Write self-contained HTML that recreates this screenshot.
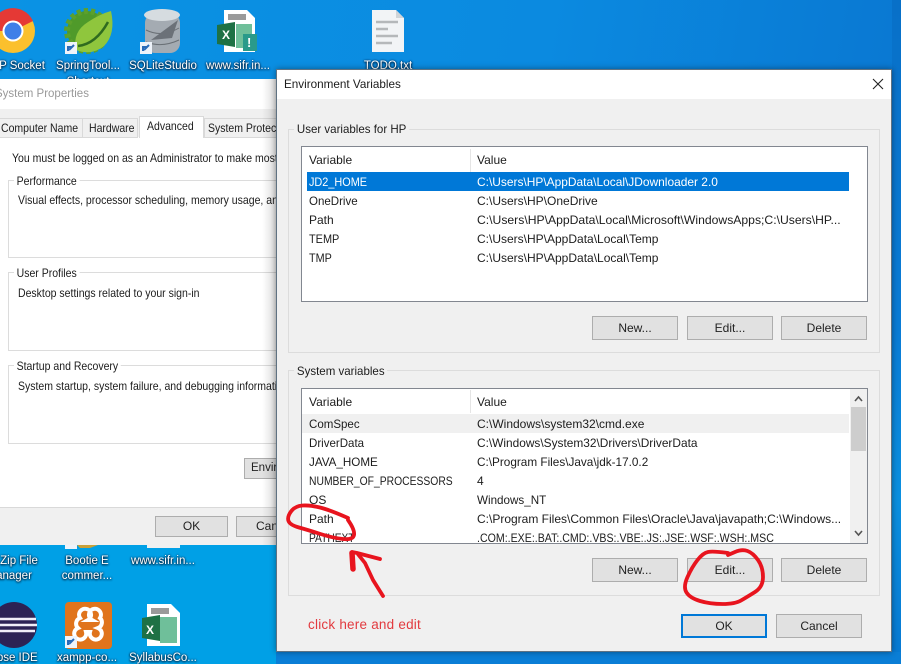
<!DOCTYPE html>
<html><head><meta charset="utf-8">
<style>
html,body{margin:0;padding:0}
#r{position:relative;width:901px;height:664px;overflow:hidden;background:#0a9ce4;font-family:"Liberation Sans",sans-serif;font-size:12px;color:#1c1c1c}
#r div,#r span{position:absolute;box-sizing:border-box}
.t{white-space:nowrap;line-height:16px;height:16px;transform-origin:0 50%}
.s{transform:scaleX(.875)}
.d{color:#fff;text-shadow:0 1px 2px #012,0 0 2px #013;white-space:nowrap;line-height:16px;height:16px;text-align:center;font-size:11.5px}
.g{border:1px solid #dcdcdc}
.b{background:#e1e1e1;border:1px solid #adadad;text-align:center;line-height:22px;color:#222}
.l{border:1px solid #828790;background:#fff}
svg{position:absolute;left:0;top:0}
</style></head><body><div id="r">
<div style="left:0;top:0;width:901px;height:90px;background:linear-gradient(100deg,#0a93e4,#0b8ae0 60%,#0a78d2)"></div>
<div style="left:0;top:545px;width:280px;height:119px;background:#00a0e6"></div>
<div style="left:892px;top:0;width:9px;height:664px;background:linear-gradient(#0870c8,#0a7cd6 50%,#0b90e0 75%,#0778d2)"></div>
<div style="left:276px;top:652px;width:625px;height:12px;background:#0a7ed6"></div>

<svg width="901" height="664" viewBox="0 0 901 664">
<circle cx="13" cy="31" r="22" fill="#fbc02d"/><path d="M13 31L-9 31A22 22 0 0 1 33 21Z" fill="#e53935"/><circle cx="13" cy="31" r="10.5" fill="#fff"/><circle cx="13" cy="31" r="8.5" fill="#3f7fe8"/>
<circle cx="87" cy="31" r="20" fill="#4f9a2a" stroke="#5ca02c" stroke-width="6" stroke-dasharray="4 3"/>
<path d="M76 50Q72 32 88 22Q100 14 111 11Q116 34 104 46Q92 56 76 50Z" fill="#8fc63d"/><path d="M78 46Q96 44 108 22" stroke="#2f6b1f" stroke-width="2.5" fill="none"/>
<rect x="65" y="42" width="12" height="12" fill="#eef3fa"/><path d="M68 51V47H72M69 50L74 45" stroke="#2a6bb8" stroke-width="2" fill="none"/>
<rect x="145" y="13" width="35" height="40" rx="10" fill="#a4abb2"/><ellipse cx="162" cy="15" rx="18" ry="6" fill="#d6dce0"/><path d="M146 30Q162 38 179 28M146 42Q162 48 179 40" stroke="#6a7076" fill="none"/><path d="M151 40L178 20L172 38Z" fill="#6b7178"/>
<rect x="140" y="42" width="12" height="12" fill="#eef3fa"/><path d="M143 51V47H147M144 50L149 45" stroke="#2a6bb8" stroke-width="2" fill="none"/>
<path d="M224 10H247L255 18V52H224Z" fill="#fff"/><rect x="228" y="14" width="18" height="6" fill="#9a9a9a"/><rect x="236" y="24" width="16" height="24" fill="#6fbf9a"/><path d="M217 25L235 22V47L217 44Z" fill="#1e7145"/><text x="222" y="39" fill="#fff" font-size="12" font-weight="bold" font-family="Liberation Sans">X</text><rect x="243" y="34" width="14" height="17" fill="#2a9a8a"/><text x="247" y="47" font-size="13" font-weight="bold" fill="#fff" font-family="Liberation Sans">!</text>
<path d="M372 10H396L404 18V52H372Z" fill="#f2f4f6"/><path d="M396 10V18H404" fill="#cfd4d8"/><path d="M376 22H398M376 29H388M376 36H398M376 43H392" stroke="#b5b8ba" stroke-width="2.5"/>
<rect x="65" y="602" width="47" height="47" rx="4" fill="#e0741c"/><path d="M80 618a6 6 0 1 1 8 2h4a6 6 0 1 1 8-2a6 6 0 0 1-2 10a6 6 0 1 1-8 4h-4a6 6 0 1 1-8-4a6 6 0 0 1 2-10z" fill="none" stroke="#fff" stroke-width="4"/>
<rect x="65" y="636" width="12" height="12" fill="#eef3fa"/><path d="M68 645V641H72M69 644L74 639" stroke="#2a6bb8" stroke-width="2" fill="none"/>
<circle cx="14" cy="625" r="23" fill="#2c2255"/><path d="M-9 619H36M-9 625H37M-8 631H35" stroke="#f0eef8" stroke-width="2.5"/>
<path d="M147 604H171L180 613V646H147Z" fill="#fff"/><rect x="151" y="608" width="18" height="6" fill="#9a9a9a"/><rect x="160" y="617" width="17" height="26" fill="#6fbf9a"/><path d="M142 618L160 615V641L142 638Z" fill="#1e7145"/><text x="146" y="634" fill="#fff" font-size="12" font-weight="bold" font-family="Liberation Sans">X</text>
<rect x="147" y="545" width="33" height="3" fill="#f0f0f0"/><rect x="65" y="545" width="12" height="4" fill="#eef3fa"/><path d="M77 545H98L90 548H80Z" fill="#c9a13a"/>
</svg>

<div class="d" style="left:-12px;top:58px;width:68px">P Socket</div>
<div class="d" style="left:48px;top:58px;width:80px">SpringTool...</div>
<div class="d" style="left:125px;top:58px;width:76px">SQLiteStudio</div>
<div class="d" style="left:198px;top:58px;width:80px">www.sifr.in...</div>
<div class="d" style="left:50px;top:74px;width:76px">Shortcut</div>
<div class="d" style="left:350px;top:58px;width:76px">TODO.txt</div>
<div class="d" style="left:-10px;top:553px;width:58px">Zip File</div>
<div class="d" style="left:-10px;top:568px;width:48px">anager</div>
<div class="d" style="left:52px;top:553px;width:70px">Bootie E</div>
<div class="d" style="left:52px;top:568px;width:70px">commer...</div>
<div class="d" style="left:125px;top:553px;width:76px">www.sifr.in...</div>
<div class="d" style="left:-12px;top:650px;width:56px">ipse IDE</div>
<div class="d" style="left:52px;top:650px;width:70px">xampp-co...</div>
<div class="d" style="left:125px;top:650px;width:76px">SyllabusCo...</div>

<!-- System Properties -->
<div style="left:0;top:79px;width:276px;height:466px;background:#f0f0f0;overflow:hidden">
 <div style="left:0;top:0;width:276px;height:30px;background:#fff"></div>
 <div class="t" style="left:-5px;top:7px;color:#999;font-size:11.5px">System Properties</div>
 <div style="left:0;top:58px;width:276px;height:371px;background:#fff;border-bottom:1px solid #d9d9d9"></div>
 <div style="left:-2px;top:39px;width:85px;height:20px;border:1px solid #d9d9d9;background:#f0f0f0"></div>
 <div style="left:82px;top:39px;width:56px;height:20px;border:1px solid #d9d9d9;background:#f0f0f0"></div>
 <div style="left:139px;top:37px;width:65px;height:22px;border:1px solid #d9d9d9;border-bottom:0;background:#fff"></div>
 <div style="left:204px;top:39px;width:80px;height:20px;border:1px solid #d9d9d9;background:#f0f0f0"></div>
 <div class="t s" style="left:1px;top:41px">Computer Name</div>
 <div class="t s" style="left:89px;top:41px">Hardware</div>
 <div class="t s" style="left:147px;top:39px">Advanced</div>
 <div class="t s" style="left:208px;top:41px;width:78px;overflow:hidden">System Protection</div>
 <div class="t s" style="left:12px;top:71px;width:302px;overflow:hidden">You must be logged on as an Administrator to make most of these</div>
 <div class="g" style="left:8px;top:101px;width:290px;height:78px"></div>
 <div class="t s" style="left:14px;top:94px;padding:0 3px;background:#fff">Performance</div>
 <div class="t s" style="left:18px;top:113px;width:295px;overflow:hidden">Visual effects, processor scheduling, memory usage, and virtual</div>
 <div class="g" style="left:8px;top:193px;width:290px;height:79px"></div>
 <div class="t s" style="left:14px;top:186px;padding:0 3px;background:#fff">User Profiles</div>
 <div class="t s" style="left:18px;top:206px">Desktop settings related to your sign-in</div>
 <div class="g" style="left:8px;top:286px;width:290px;height:79px"></div>
 <div class="t s" style="left:14px;top:279px;padding:0 3px;background:#fff">Startup and Recovery</div>
 <div class="t s" style="left:18px;top:299px;width:295px;overflow:hidden">System startup, system failure, and debugging information</div>
 <div class="b" style="left:244px;top:379px;width:60px;height:21px;line-height:19px;text-align:left;padding-left:6px;font-size:11.5px">Enviro</div>
 <div class="b" style="left:155px;top:437px;width:73px;height:21px;line-height:19px">OK</div>
 <div class="b" style="left:236px;top:437px;width:73px;height:21px;line-height:19px;text-align:left;padding-left:19px">Cancel</div>
 <div style="left:262px;top:0;width:14px;height:466px;background:linear-gradient(90deg,rgba(0,0,0,0),rgba(0,0,0,.13))"></div>
</div>

<!-- Env Vars -->
<div style="left:276px;top:69px;width:616px;height:583px;background:#f0f0f0;box-shadow:0 0 6px rgba(0,0,0,.4);border:1px solid #5f7282">
 <div style="left:0;top:0;width:614px;height:29px;background:#fff"></div>
 <div class="t" style="left:7px;top:6px;transform:scaleX(.975)">Environment Variables</div>
 <svg style="left:595px;top:8px" width="12" height="12"><path d="M1 1L11 11M11 1L1 11" stroke="#222" stroke-width="1.1"/></svg>

 <div class="g" style="left:11px;top:59px;width:592px;height:224px"></div>
 <div class="t" style="left:17px;top:51px;padding:0 3px;background:#f0f0f0;transform:scaleX(.96)">User variables for HP</div>
 <div class="l" style="left:24px;top:76px;width:567px;height:156px"></div>
 <div style="left:193px;top:79px;width:1px;height:23px;background:#e5e5e5"></div>
 <div class="t" style="left:32px;top:82px">Variable</div>
 <div class="t" style="left:200px;top:82px">Value</div>
 <div style="left:30px;top:102px;width:542px;height:19px;background:#0078d7"></div>
 <div class="t" style="left:32px;top:104px;color:#fff;transform:scaleX(.906)">JD2_HOME</div>
 <div class="t" style="left:200px;top:104px;color:#fff;transform:scaleX(.995)">C:\Users\HP\AppData\Local\JDownloader 2.0</div>
 <div class="t" style="left:32px;top:123px;transform:scaleX(.96)">OneDrive</div>
 <div class="t" style="left:200px;top:123px">C:\Users\HP\OneDrive</div>
 <div class="t" style="left:32px;top:142px">Path</div>
 <div class="t" style="left:200px;top:142px;transform:scaleX(1.014)">C:\Users\HP\AppData\Local\Microsoft\WindowsApps;C:\Users\HP...</div>
 <div class="t" style="left:32px;top:161px;transform:scaleX(.91)">TEMP</div>
 <div class="t" style="left:200px;top:161px">C:\Users\HP\AppData\Local\Temp</div>
 <div class="t" style="left:32px;top:180px;transform:scaleX(.9)">TMP</div>
 <div class="t" style="left:200px;top:180px">C:\Users\HP\AppData\Local\Temp</div>
 <div class="b" style="left:315px;top:246px;width:86px;height:24px">New...</div>
 <div class="b" style="left:410px;top:246px;width:86px;height:24px">Edit...</div>
 <div class="b" style="left:504px;top:246px;width:86px;height:24px">Delete</div>

 <div class="g" style="left:11px;top:300px;width:592px;height:226px"></div>
 <div class="t" style="left:17px;top:293px;padding:0 3px;background:#f0f0f0;transform:scaleX(.96)">System variables</div>
 <div class="l" style="left:24px;top:318px;width:567px;height:156px"></div>
 <div style="left:193px;top:320px;width:1px;height:23px;background:#e5e5e5"></div>
 <div class="t" style="left:32px;top:324px">Variable</div>
 <div class="t" style="left:200px;top:324px">Value</div>
 <div style="left:25px;top:344px;width:547px;height:19px;background:#f0f0f0"></div>
 <div class="t" style="left:32px;top:346px;transform:scaleX(.96)">ComSpec</div>
 <div class="t" style="left:200px;top:346px">C:\Windows\system32\cmd.exe</div>
 <div class="t" style="left:32px;top:365px;transform:scaleX(.96)">DriverData</div>
 <div class="t" style="left:200px;top:365px;transform:scaleX(.99)">C:\Windows\System32\Drivers\DriverData</div>
 <div class="t" style="left:32px;top:384px;transform:scaleX(.97)">JAVA_HOME</div>
 <div class="t" style="left:200px;top:384px;transform:scaleX(.98)">C:\Program Files\Java\jdk-17.0.2</div>
 <div class="t" style="left:32px;top:403px;transform:scaleX(.862)">NUMBER_OF_PROCESSORS</div>
 <div class="t" style="left:200px;top:403px">4</div>
 <div class="t" style="left:32px;top:422px">OS</div>
 <div class="t" style="left:200px;top:422px;transform:scaleX(.97)">Windows_NT</div>
 <div class="t" style="left:32px;top:441px">Path</div>
 <div class="t" style="left:200px;top:441px">C:\Program Files\Common Files\Oracle\Java\javapath;C:\Windows...</div>
 <div style="left:25px;top:455px;width:547px;height:18px;overflow:hidden">
  <div class="t" style="left:7px;top:5px;transform:scaleX(.85)">PATHEXT</div>
  <div class="t" style="left:175px;top:5px;transform:scaleX(.884)">.COM:.EXE:.BAT:.CMD:.VBS:.VBE:.JS:.JSE:.WSF:.WSH:.MSC</div>
 </div>
 <div style="left:573px;top:319px;width:17px;height:154px;background:#f0f0f0"></div>
 <div style="left:574px;top:337px;width:15px;height:44px;background:#cdcdcd"></div>
 <svg style="left:573px;top:319px" width="17" height="154"><path d="M5 12L8.5 8L12 12M5 142L8.5 146L12 142" stroke="#555" stroke-width="1.6" fill="none"/></svg>
 <div class="b" style="left:315px;top:488px;width:86px;height:24px">New...</div>
 <div class="b" style="left:410px;top:488px;width:86px;height:24px">Edit...</div>
 <div class="b" style="left:504px;top:488px;width:86px;height:24px">Delete</div>
 <div class="b" style="left:404px;top:544px;width:86px;height:24px;border:2px solid #0078d7;line-height:20px">OK</div>
 <div class="b" style="left:499px;top:544px;width:86px;height:24px">Cancel</div>
 <div class="t" style="left:31px;top:547px;color:#e23a3f;font-size:13.5px;letter-spacing:.22px">click here and edit</div>
</div>

<svg width="901" height="664" viewBox="0 0 901 664" fill="none" stroke="#e8141e" stroke-width="3.8" stroke-linecap="round" stroke-linejoin="round">
<path d="M348 518Q330 510 320 507.5Q310 505 302.5 505.5Q295 506 291 511.5Q287 517 288.5 521Q290 525 299 527.5Q308 530 320.5 534Q333 538 343 539Q353 540 354 535Q355 530 348 520"/>
<path d="M383 596L373 580L365 563L357 553L352 552M357 553L380 559"/>
<path d="M352 553L353 569" stroke-width="5.5"/>
<path d="M728 553Q713 551 708 552Q703 553 697.5 560Q692 567 687.5 577Q683 587 686.5 592.5Q690 598 700 601Q710 604 722.5 604Q735 604 741 600.5Q747 597 755 592Q763 587 763 577Q763 567 758 560Q753 553 747.5 551Q742 549 735 552L728 555"/>
</svg>
</div></body></html>
